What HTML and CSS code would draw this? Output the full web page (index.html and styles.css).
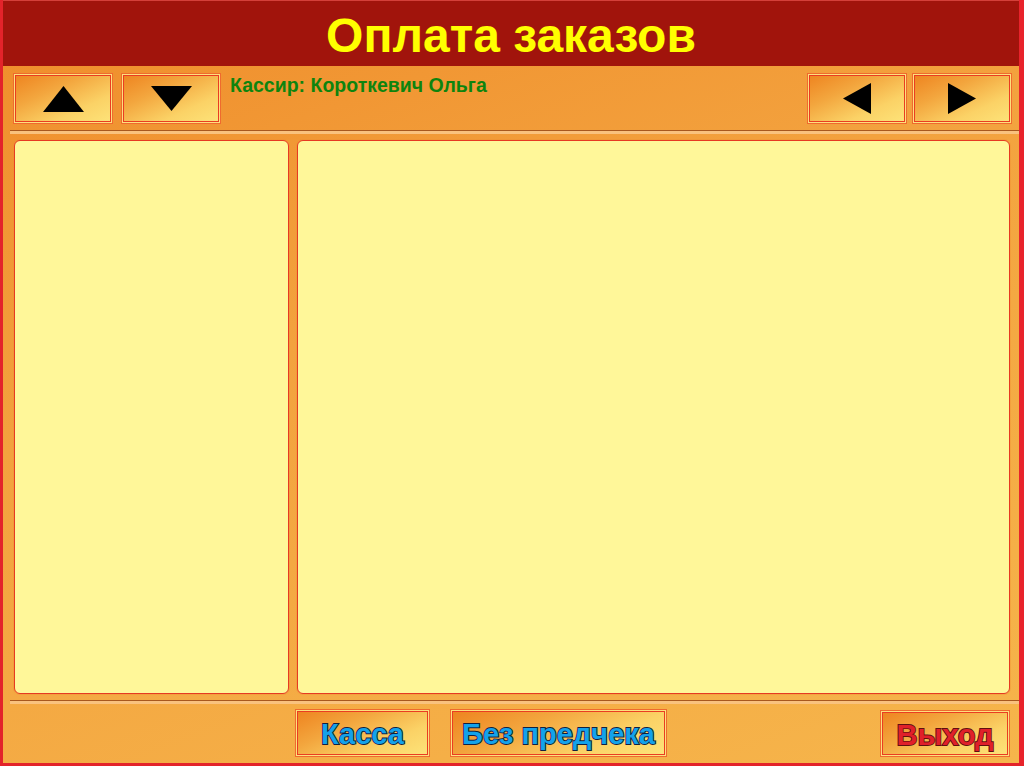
FILE: index.html
```html
<!DOCTYPE html>
<html lang="ru">
<head>
<meta charset="utf-8">
<title>Оплата заказов</title>
<link rel="stylesheet" href="styles.css">
</head>
<body>
<div class="window">
  <header class="title-bar">
    <h1 class="title">Оплата заказов</h1>
  </header>
  <div class="body">
    <div class="toolbar">
      <button class="btn nav-btn" type="button" aria-label="Вверх">
        <svg width="41" height="26" viewBox="0 0 41 26"><polygon points="20.5,0 41,26 0,26" fill="#000"/></svg>
      </button>
      <button class="btn nav-btn" type="button" aria-label="Вниз">
        <svg width="41" height="25" viewBox="0 0 41 25"><polygon points="0,0 41,0 20.5,25" fill="#000"/></svg>
      </button>
      <div class="cashier">Кассир: Короткевич Ольга</div>
      <button class="btn nav-btn" type="button" aria-label="Назад">
        <svg width="28" height="31" viewBox="0 0 28 31"><polygon points="0,15.5 28,0 28,31" fill="#000"/></svg>
      </button>
      <button class="btn nav-btn" type="button" aria-label="Вперёд">
        <svg width="28" height="31" viewBox="0 0 28 31"><polygon points="0,0 28,15.5 0,31" fill="#000"/></svg>
      </button>
    </div>
    <div class="separator"></div>
    <main class="panels">
      <section class="panel panel-left"></section>
      <section class="panel panel-right"></section>
    </main>
    <div class="separator"></div>
    <footer class="footer">
      <button class="btn action-btn btn-kassa" type="button"><span class="label label-blue">Касса</span></button>
      <button class="btn action-btn btn-noprecheck" type="button"><span class="label label-blue">Без предчека</span></button>
      <div class="spacer"></div>
      <button class="btn action-btn btn-exit" type="button"><span class="label label-red">Выход</span></button>
    </footer>
  </div>
</div>
</body>
</html>
```
FILE: styles.css
```css
* { box-sizing: border-box; }
html, body {
  margin: 0;
  padding: 0;
  width: 1024px;
  height: 766px;
  overflow: hidden;
  font-family: "Liberation Sans", Arial, sans-serif;
}
.window {
  width: 1024px;
  height: 766px;
  display: flex;
  flex-direction: column;
  border-left: 3px solid #e3232a;
  border-right: 5px solid #e8232b;
  border-bottom: 3px solid #e3232a;
  background: linear-gradient(160deg, #ef8c2a 0%, #f3a23e 40%, #f6b54b 100%);
}
.title-bar {
  height: 66px;
  flex: 0 0 66px;
  background: #a1140c;
  border-top: 1px solid #d4403a;
  display: flex;
  align-items: center;
  justify-content: center;
}
.title {
  margin: 0;
  font-size: 48px;
  font-weight: bold;
  color: #ffff00;
  line-height: 1;
  padding-top: 4px;
}
.body {
  flex: 1;
  display: flex;
  flex-direction: column;
}
.toolbar {
  height: 64px;
  flex: 0 0 64px;
  display: flex;
  align-items: flex-start;
  padding: 7px 7px 0 10px;
  gap: 8px;
}
.btn {
  border: 1px solid #ef6a2e;
  box-shadow: inset 0 0 0 1px #fde07c, inset 0 0 0 2px #ea3c22;
  background: linear-gradient(155deg, #ee821e 0%, #f3a63e 35%, #fbd266 70%, #fde47a 100%);
  padding: 0;
  margin: 0;
  display: flex;
  align-items: center;
  justify-content: center;
  font-family: "Liberation Sans", Arial, sans-serif;
  cursor: pointer;
}
.nav-btn {
  width: 100px;
  height: 51px;
  flex: 0 0 100px;
}
.nav-btn + .nav-btn:last-child { margin-left: -3px; }
.cashier {
  flex: 1;
  color: #0e840e;
  font-weight: bold;
  font-size: 19.5px;
  line-height: 1;
  padding-top: 3px;
  margin-left: 1px;
}
.separator {
  height: 4px;
  flex: 0 0 4px;
  margin: 0 0 0 7px;
  border-top: 1px solid #a8581e;
  background: #f9c27e;
}
.panels {
  flex: 1;
  display: flex;
  gap: 8px;
  padding: 6px 9px 6px 11px;
}
.panel {
  background: #fff799;
  border: 1px solid #e63a22;
  border-radius: 6px;
  box-shadow: 0 0 0 1px rgba(240, 140, 50, 0.35);
}
.panel-left { width: 275px; flex: 0 0 275px; }
.panel-right { flex: 1; }
.footer {
  height: 59px;
  flex: 0 0 59px;
  display: flex;
  align-items: flex-start;
  padding: 5px 9px 0 292px;
  gap: 20px;
}
.spacer { flex: 1; }
.action-btn {
  height: 48px;
}
.btn-kassa { width: 135px; }
.btn-noprecheck { width: 217px; }
.btn-exit { width: 130px; margin-top: 1px; height: 47px; }
.label {
  font-size: 29px;
  font-weight: bold;
  line-height: 1;
  paint-order: stroke fill;
  padding-top: 3px;
}
.label-blue {
  color: #14a2ea;
  -webkit-text-stroke: 1.8px #122040;
}
.label-red {
  color: #e0202a;
  -webkit-text-stroke: 1.8px #601010;
}
```
